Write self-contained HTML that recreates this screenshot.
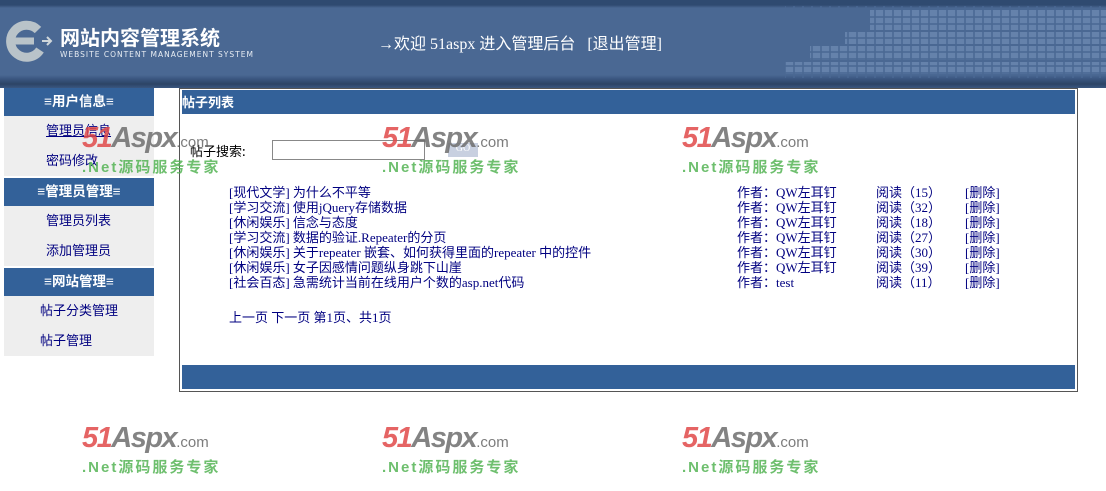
<!DOCTYPE html>
<html><head><meta charset="utf-8"><style>
body{margin:0;width:1106px;height:491px;background:#fff;position:relative;overflow:hidden;font-family:"Liberation Serif","Noto Sans CJK SC",serif;}
.a{position:absolute;}
.hdr{left:0;top:0;width:1106px;height:88px;background:linear-gradient(#2f4a70 0,#2f4a70 5px,#4a6893 8px,#4a6893 75px,#3a5680 79px,#2c4466 84px,#3a5680 88px);}
.side{left:4px;width:150px;font-family:"Liberation Sans","Noto Sans CJK SC",sans-serif;font-size:13px;}
.sh{background:#336199;color:#fff;font-weight:bold;text-align:center;height:28px;line-height:28px;font-size:13.5px;}
.si{background:#eeeeee;height:30px;line-height:30px;color:#000080;}
.wm{font-family:"Liberation Sans","Noto Sans CJK SC",sans-serif;}
.wm .t{font-size:29px;font-weight:900;font-style:italic;color:#e14a4a;letter-spacing:-1.5px;line-height:28px;}
.wm .t span{color:#6e6e6e}
.wm .t small{font-size:15px;color:#666;font-style:normal;font-weight:normal;letter-spacing:0}
.wm .s{font-size:15px;font-weight:bold;color:#55b455;line-height:18px;margin-top:2px;letter-spacing:2px;}
.row{font-size:13px;color:#000080;line-height:15px;}
</style></head><body>
<div class="a hdr"></div>
<svg class="a" style="left:785px;top:6px" width="321" height="72">
<g fill="#6f8bb3" opacity=".75">
<rect x="85" y="4" width="236" height="20"/><rect x="60" y="26" width="261" height="12"/><rect x="25" y="40" width="296" height="14"/><rect x="0" y="56" width="321" height="12"/>
</g>
<g stroke="#4a6893" stroke-width="1.5"><path d="M0 0 V72 M9 0V72 M18 0V72 M27 0V72 M36 0V72 M45 0V72 M54 0V72 M63 0V72 M72 0V72 M81 0V72 M90 0V72 M99 0V72 M108 0V72 M117 0V72 M126 0V72 M135 0V72 M144 0V72 M153 0V72 M162 0V72 M171 0V72 M180 0V72 M189 0V72 M198 0V72 M207 0V72 M216 0V72 M225 0V72 M234 0V72 M243 0V72 M252 0V72 M261 0V72 M270 0V72 M279 0V72 M288 0V72 M297 0V72 M306 0V72 M315 0V72 M0 11H321 M0 18H321 M0 25H321 M0 32H321 M0 39H321 M0 46H321 M0 53H321 M0 60H321 M0 67H321"/></g>
</svg>
<svg class="a" style="left:4px;top:20px" width="50" height="42"><path d="M34 10 A16 16 0 1 0 36 30" stroke="#b9c3c9" stroke-width="9" fill="none"/><path d="M10 21 H30" stroke="#b9c3c9" stroke-width="7"/><path d="M38 21h8M43 17l4 4-4 4" stroke="#cfd6da" stroke-width="2" fill="none"/></svg>
<div class="a" style="left:60px;top:24px;color:#fff;font:bold 20px 'Noto Sans CJK SC',sans-serif;line-height:26px">网站内容管理系统</div>
<div class="a" style="left:60px;top:50px;color:#e8edf3;font:7.5px 'DejaVu Sans',sans-serif;letter-spacing:1px">WEBSITE CONTENT MANAGEMENT SYSTEM</div>
<div class="a" style="left:378px;top:35px;color:#fff;font-size:16px;line-height:20px">→欢迎 51aspx 进入管理后台 &nbsp;&nbsp;[退出管理]</div>

<div class="a side" style="top:88px">
<div class="sh">≡用户信息≡</div>
<div class="si" style="padding-left:42px;text-decoration:underline">管理员信息</div>
<div class="si" style="padding-left:42px">密码修改</div>
<div style="height:2px"></div>
<div class="sh">≡管理员管理≡</div>
<div class="si" style="padding-left:42px">管理员列表</div>
<div class="si" style="padding-left:42px">添加管理员</div>
<div style="height:2px"></div>
<div class="sh">≡网站管理≡</div>
<div class="si" style="padding-left:36px">帖子分类管理</div>
<div class="si" style="padding-left:36px">帖子管理</div>
</div>

<div class="a" style="left:179px;top:88px;width:897px;height:302px;border:1px solid #555;"></div>
<div class="a" style="left:182px;top:90px;width:893px;height:24px;background:#336199;color:#fff;font:bold 13px 'Noto Sans CJK SC',sans-serif;line-height:24px;">帖子列表</div>
<div class="a" style="left:182px;top:365px;width:893px;height:24px;background:#336199"></div>
<div class="a" style="left:190px;top:141px;font-size:13px;font-family:'Noto Sans CJK SC',sans-serif">帖子搜索:</div>
<div class="a" style="left:272px;top:140px;width:151px;height:18px;border:1px solid #888"></div>
<div class="a" style="left:448px;top:143px;width:30px;height:14px;background:#c8d0e0;color:#fff;font-size:10px;text-align:center">GO</div>

<div class="a row" style="left:229px;top:185px">
[现代文学] 为什么不平等<br>[学习交流] 使用jQuery存储数据<br>[休闲娱乐] 信念与态度<br>[学习交流] 数据的验证.Repeater的分页<br>[休闲娱乐] 关于repeater 嵌套、如何获得里面的repeater 中的控件<br>[休闲娱乐] 女子因感情问题纵身跳下山崖<br>[社会百态] 急需统计当前在线用户个数的asp.net代码
</div>
<div class="a row" style="left:737px;top:185px">作者：QW左耳钉<br>作者：QW左耳钉<br>作者：QW左耳钉<br>作者：QW左耳钉<br>作者：QW左耳钉<br>作者：QW左耳钉<br>作者：test</div>
<div class="a row" style="left:876px;top:185px">阅读（15）<br>阅读（32）<br>阅读（18）<br>阅读（27）<br>阅读（30）<br>阅读（39）<br>阅读（11）</div>
<div class="a row" style="left:965px;top:185px">[删除]<br>[删除]<br>[删除]<br>[删除]<br>[删除]<br>[删除]<br>[删除]</div>
<div class="a row" style="left:229px;top:310px">上一页 下一页 第1页、共1页</div>

<div class="a wm" style="left:82px;top:124px;opacity:.85"><div class="t">51<span>Aspx</span><small>.com</small></div><div class="s">.Net源码服务专家</div></div>
<div class="a wm" style="left:382px;top:124px;opacity:.85"><div class="t">51<span>Aspx</span><small>.com</small></div><div class="s">.Net源码服务专家</div></div>
<div class="a wm" style="left:682px;top:124px;opacity:.85"><div class="t">51<span>Aspx</span><small>.com</small></div><div class="s">.Net源码服务专家</div></div>
<div class="a wm" style="left:82px;top:424px;opacity:.85"><div class="t">51<span>Aspx</span><small>.com</small></div><div class="s">.Net源码服务专家</div></div>
<div class="a wm" style="left:382px;top:424px;opacity:.85"><div class="t">51<span>Aspx</span><small>.com</small></div><div class="s">.Net源码服务专家</div></div>
<div class="a wm" style="left:682px;top:424px;opacity:.85"><div class="t">51<span>Aspx</span><small>.com</small></div><div class="s">.Net源码服务专家</div></div>
</body></html>
